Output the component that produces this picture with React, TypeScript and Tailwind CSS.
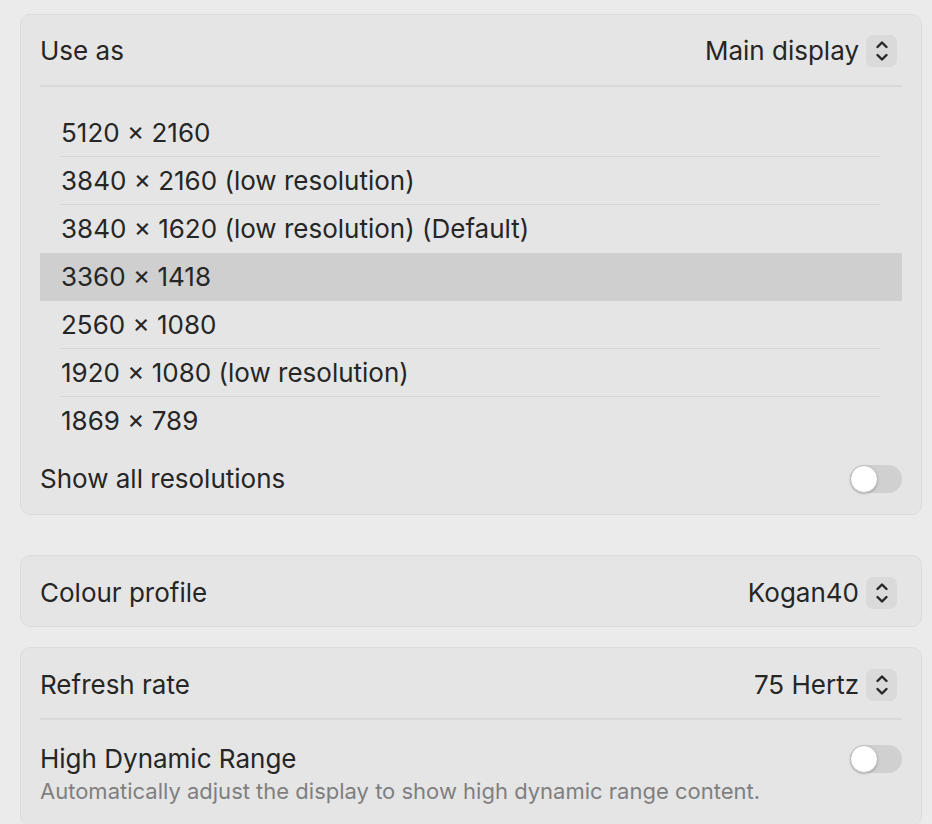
import React from 'react'

const resolutions = [
  { label: '5120 × 2160' },
  { label: '3840 × 2160 (low resolution)' },
  { label: '3840 × 1620 (low resolution) (Default)' },
  { label: '3360 × 1418', selected: true },
  { label: '2560 × 1080' },
  { label: '1920 × 1080 (low resolution)' },
  { label: '1869 × 789' },
]

const Stepper = () => (
  <span className="ml-[7px] mr-[5px] flex h-[32px] w-[31px] items-center justify-center rounded-[7px] bg-[#dadada]">
    <svg width="14" height="24" viewBox="0 0 14 24" fill="none" stroke="#262626" strokeWidth="2.4" strokeLinecap="round" strokeLinejoin="round">
      <path d="M2.5 8 7 3.5 11.5 8" />
      <path d="M2.5 16 7 20.5 11.5 16" />
    </svg>
  </span>
)

const Toggle = ({ className = '' }: { className?: string }) => (
  <span className={`relative block h-[28px] w-[52px] shrink-0 rounded-full bg-[#d0d0d0] ${className}`}>
    <span className="absolute left-0 top-0 h-[28px] w-[28px] rounded-full border border-[#bdbdbd] bg-white shadow-[0_1px_2px_rgba(0,0,0,0.2)]" />
  </span>
)

const Card = ({ children, className = '' }: { children: React.ReactNode; className?: string }) => (
  <div className={`rounded-[10px] border border-[#dcdcdc] bg-[#e5e5e5] px-[19px] ${className}`}>{children}</div>
)

export default function App() {
  return (
    <div
      className="h-[824px] w-[932px] overflow-hidden bg-[#ebebeb] pl-[20px] pr-[10px] pt-[14px] text-[26px] leading-[32px] text-[#262626]"
      style={{ fontFamily: 'Inter, "Noto Sans", sans-serif' }}
    >
      <Card>
        <div className="flex h-[72px] items-center justify-between border-b-2 border-[#dadada] pt-[2px]">
          <span>Use as</span>
          <span className="flex items-center">
            Main display
            <Stepper />
          </span>
        </div>
        <div className="pt-[22px]">
          {resolutions.map((r, i) => (
            <div
              key={r.label}
              className={`flex h-[48px] items-center px-[21px] ${r.selected ? 'bg-[#cfcfcf]' : ''}`}
            >
              <div
                className={`flex h-full flex-1 items-center ${
                  i < resolutions.length - 1 && !r.selected && !resolutions[i + 1].selected
                    ? 'border-b border-[#d6d6d6]'
                    : ''
                }`}
              >
                {r.label}
              </div>
            </div>
          ))}
        </div>
        <div className="flex h-[69px] items-center justify-between pb-[2px]">
          <span>Show all resolutions</span>
          <Toggle />
        </div>
      </Card>

      <Card className="mt-[40px]">
        <div className="flex h-[70px] items-center justify-between pt-[3px]">
          <span>Colour profile</span>
          <span className="flex items-center">
            Kogan40
            <Stepper />
          </span>
        </div>
      </Card>

      <Card className="mt-[20px]">
        <div className="flex h-[72px] items-center justify-between border-b-2 border-[#dadada] pt-[3px]">
          <span>Refresh rate</span>
          <span className="flex items-center">
            75 Hertz
            <Stepper />
          </span>
        </div>
        <div className="flex items-start justify-between pb-[18px] pt-[23px]">
          <div className="flex flex-col">
            <span className="leading-[32px]">High Dynamic Range</span>
            <span className="text-[22px] leading-[32px] text-[#7f7f7f]">
              Automatically adjust the display to show high dynamic range content.
            </span>
          </div>
          <Toggle className="mt-[2px]" />
        </div>
      </Card>
    </div>
  )
}
